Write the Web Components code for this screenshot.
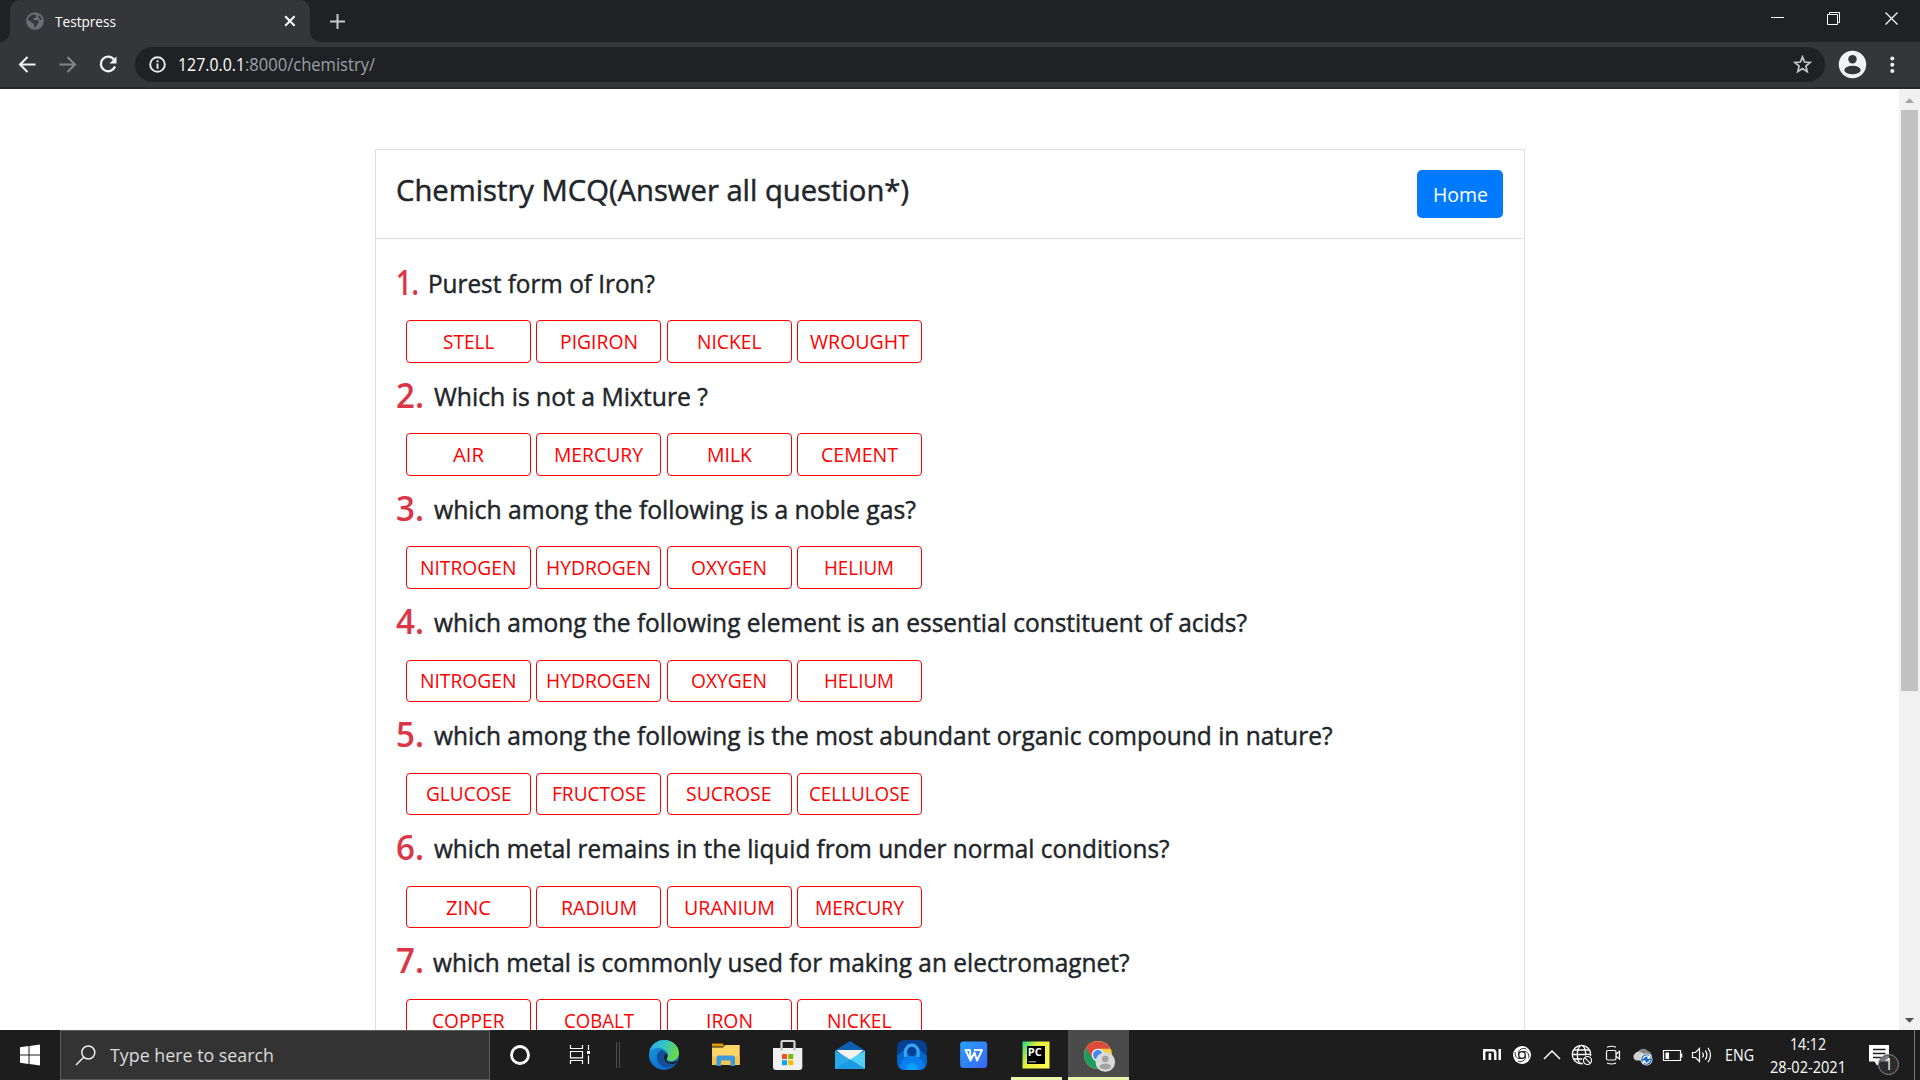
<!DOCTYPE html>
<html lang="en">
<head>
<meta charset="utf-8">
<title>Testpress</title>
<style>
html,body{margin:0;height:100%;overflow:hidden;background:#fff}
body{font-family:"Open Sans","Noto Sans",sans-serif}
</style>
</head>
<body>
<desktop-screen></desktop-screen>
<script>
function define(name, html, after){
  const t=document.createElement('template');
  t.innerHTML=html;
  customElements.define(name, class extends HTMLElement{
    constructor(){super();this.attachShadow({mode:'open'}).appendChild(t.content.cloneNode(true));}
    connectedCallback(){ if(after) after.call(this,this.shadowRoot); }
  });
}

/* Text squeezed or stretched to a set advance width */
define('fit-text', `<style>
:host{display:inline-block;white-space:nowrap}
span{display:inline-block;transform-origin:0 50%;white-space:pre}
</style><span><slot></slot></span>`, function(r){
  const w=+this.getAttribute('w'), s=r.querySelector('span');
  this.style.width=w+'px';
  const n=s.getBoundingClientRect().width;
  if(n) s.style.transform='scaleX('+(w/n)+')';
});

define('tab-strip', `<style>
:host{display:flex;height:42px;background:#202124;align-items:stretch;color:#fff}
.tab{width:300px;margin-left:10px;background:#35363a;border-radius:10px 10px 0 0;display:flex;align-items:center;position:relative;box-sizing:border-box;padding:0 14px 0 16px;font-size:15px}
.tab::before,.tab::after{content:"";position:absolute;bottom:0;width:10px;height:10px}
.tab::before{left:-10px;background:radial-gradient(circle at 0 0,transparent 9.5px,#35363a 10px)}
.tab::after{right:-10px;background:radial-gradient(circle at 100% 0,transparent 9.5px,#35363a 10px)}
.tab svg:first-child{margin-right:11px}
.x{margin-left:auto}
.plus{margin:13px 0 0 19px}
.win{margin-left:auto;display:flex}
svg{display:block}
</style>
<div class="tab">
<svg width="18" height="18" viewBox="0 0 18 18"><circle cx="9" cy="9" r="8.8" fill="#6b6e72"/><path d="M2.600 5.500Q4.500 2.600 8.500 2.300L10.500 3.700 9.800 5.400 7.400 6.200 7.300 7.800 9.600 8.300 12.300 8.200 12.800 10.200 11.200 12 10.800 13.600 8.200 15.800Q7.800 13.300 8.300 11.800L5.500 10.800 4.600 8.800 2 8.500Z" fill="#35363a"/><path d="M12 3L14.800 5 15.900 8.200 14 7.500 12.700 5.600Z" fill="#35363a"/></svg>
<fit-text w="61">Testpress</fit-text>
<svg class="x" width="12" height="12" viewBox="0 0 12 12"><path d="M1.200 1.200L10.600 10.800M10.600 1.200L1.200 10.800" stroke="#fff" stroke-width="2"/></svg>
</div>
<svg class="plus" width="17" height="17" viewBox="0 0 17 17"><path d="M8.500 1V16M1 8.500H16" stroke="#c6c8ca" stroke-width="2"/></svg>
<div class="win">
<svg width="59" height="42" viewBox="0 0 59 42"><path d="M25 17.500H38" stroke="#fff"/></svg>
<svg width="57" height="42" viewBox="0 0 57 42"><path d="M22.500 14.500H32.500V24.500H22.500ZM24.500 14V12.500H34.500V22.500H33" stroke="#fff" fill="none"/></svg>
<svg width="58" height="42" viewBox="0 0 58 42"><path d="M23.500 12.500L35.500 24.500M35.500 12.500L23.500 24.500" stroke="#fff" stroke-width="1.200"/></svg>
</div>`);

define('tool-bar', `<style>
:host{display:flex;height:47px;background:#35363a;border-bottom:2px solid #28292c;box-sizing:border-box;align-items:flex-start;padding-top:5px}
svg{display:block;flex:none}
.nav{display:flex;width:135px}
.pill{width:1690px;height:35px;border-radius:18px;background:#202124;display:flex;align-items:center;font-size:17.500px;color:#9aa0a6;line-height:35px}
.pill .i{margin:0 12px 0 14px}
.pill b{font-weight:400;color:#fff}
.pill .s{margin-left:auto;margin-right:13px}
</style>
<div class="nav"><svg width="135" height="35" viewBox="0 0 135 35"><g fill="none" stroke-width="2"><path d="M35.500 17.500H20.500M27.500 10L20 17.500 27.500 25" stroke="#f1f3f4"/><path d="M59.500 17.500H74.500M67.500 10L75 17.500 67.500 25" stroke="#85868a"/><path d="M114 12.500A7.300 7.300 0 1 0 115 19.500" stroke="#f1f3f4" stroke-width="2.300"/></g><path d="M116.500 9.500V16.500H109.500Z" fill="#f1f3f4"/></svg></div>
<div class="pill">
<svg class="i" width="17" height="17" viewBox="0 0 17 17"><circle cx="8.500" cy="8.500" r="7.300" fill="none" stroke="#e8eaed" stroke-width="1.900"/><path d="M8.500 4.300V6.200M8.500 7.500V12.800" stroke="#e8eaed" stroke-width="1.900"/></svg>
<b><fit-text w="67">127.0.0.1</fit-text></b><fit-text w="130">:8000/chemistry/</fit-text>
<svg class="s" width="19" height="19" viewBox="0 0 19 19"><path d="M9.500 1.900L11.600 7 17.100 7.400 12.900 11 14.200 16.600 9.500 13.600 4.800 16.600 6.100 11 1.900 7.400 7.400 7Z" fill="none" stroke="#c5c6c8" stroke-width="1.700"/></svg>
</div>
<svg width="95" height="35" viewBox="0 0 95 35"><circle cx="27.500" cy="17.500" r="13.700" fill="#f1f3f4"/><circle cx="27.500" cy="12.300" r="4.200" fill="#35363a"/><ellipse cx="27.500" cy="23" rx="8.200" ry="4.300" fill="#35363a"/><g fill="#f1f3f4"><circle cx="67.300" cy="11.500" r="2"/><circle cx="67.300" cy="17.700" r="2"/><circle cx="67.300" cy="24" r="2"/></g></svg>`);

define('answer-option', `<style>
:host{display:flex;width:125px;height:42.500px;box-sizing:border-box;border:1.200px solid #f00;border-radius:4px;align-items:center;justify-content:center;color:#f00;font-size:19.500px;line-height:20px;padding-top:1px;background:#fff}
</style><slot></slot>`);

define('mcq-question', `<style>
:host{display:block;height:113.100px}
.q{display:flex;height:42px;align-items:baseline;line-height:42px;color:#212529;font-size:25px}
.t{-webkit-text-stroke:.45px #212529}
.n{color:#dc3545;font-size:34.500px;font-weight:600;flex:none;position:relative;top:1.500px}
.o{display:flex;margin:19.300px 0 0 10px;gap:5.270px}
</style><div class="q"><span class="n"></span><span class="t"></span></div><div class="o"></div>`, function(r){
  const a=k=>this.getAttribute(k), mk=(txt,w)=>{const f=document.createElement('fit-text');f.textContent=txt;f.setAttribute('w',w);return f};
  r.querySelector('.n').append(mk(a('n'), a('n')==='1.'?23:28));
  r.querySelector('.n').style.width=a('x')+'px';
  r.querySelector('.t').append(mk(a('text'), +a('w')));
  a('opts').split(',').forEach(s=>{const [t,w]=s.split(':');const o=document.createElement('answer-option');r.querySelector('.o').append(o);o.append(mk(t,+w+2));});
});

define('quiz-card', `<style>
:host{display:block;width:1150px;height:881px;box-sizing:border-box;border:1px solid #dcdee4;border-bottom:0;background:#fff;overflow:hidden}
header{display:flex;justify-content:space-between;align-items:flex-start;height:89px;box-sizing:border-box;border-bottom:1px solid #dcdee4;margin-right:1px;padding:20px 20px 0 20px}
h4{margin:0;font-size:30px;font-weight:400;line-height:39px;color:#212529;-webkit-text-stroke:.5px #212529}
.home{width:86px;height:48px;border-radius:5px;background:#007bff;color:#fff;display:flex;align-items:center;justify-content:center;font-size:20px;line-height:46px;padding-top:2px;box-sizing:border-box}
main{padding:20px 0 0 20px}
</style>
<header><h4><fit-text w="513">Chemistry MCQ(Answer all question*)</fit-text></h4><div class="home"><fit-text w="55">Home</fit-text></div></header>
<main>
<mcq-question n="1." x="32" w="227" text="Purest form of Iron?" opts="STELL:49.4,PIGIRON:76,NICKEL:62.5,WROUGHT:97"></mcq-question>
<mcq-question n="2." x="38" w="274" text="Which is not a Mixture ?" opts="AIR:29,MERCURY:87,MILK:43,CEMENT:75"></mcq-question>
<mcq-question n="3." x="38" w="482" text="which among the following is a noble gas?" opts="NITROGEN:94.5,HYDROGEN:103,OXYGEN:74,HELIUM:68"></mcq-question>
<mcq-question n="4." x="38" w="813" text="which among the following element is an essential constituent of acids?" opts="NITROGEN:94.5,HYDROGEN:103,OXYGEN:74,HELIUM:68"></mcq-question>
<mcq-question n="5." x="38" w="898.500" text="which among the following is the most abundant organic compound in nature?" opts="GLUCOSE:83.5,FRUCTOSE:92,SUCROSE:83.5,CELLULOSE:99"></mcq-question>
<mcq-question n="6." x="38" w="735.500" text="which metal remains in the liquid from under normal conditions?" opts="ZINC:43,RADIUM:74,URANIUM:89,MERCURY:87"></mcq-question>
<mcq-question n="7." x="37" w="696.500" text="which metal is commonly used for making an electromagnet?" opts="COPPER:70.5,COBALT:68,IRON:45,NICKEL:62.5"></mcq-question>
</main>`);

define('scroll-bar', `<style>
:host{display:flex;flex-direction:column;width:21px;background:#f1f1f1;align-items:center}
svg{display:block;flex:none}
.thumb{width:17px;height:581px;background:#c1c1c1}
.end{margin-top:auto}
</style><svg width="21" height="21" viewBox="0 0 21 21"><path d="M6 14L10.500 9.200 15 14Z" fill="#a3a3a3"/></svg><div class="thumb"></div><svg class="end" width="21" height="21" viewBox="0 0 21 21"><path d="M6 9L10.500 13.800 15 9Z" fill="#505050"/></svg>`);

define('task-bar', `<style>
:host{display:flex;height:50px;background:#1d1d1d;color:#fff}
svg{display:block;flex:none}
.search{width:430px;box-sizing:border-box;background:#333;border:1px solid #5c5c5c;display:flex;align-items:center;color:#dcdcdc;font-size:18.500px;line-height:46px}
.search svg{margin:0 13px 0 14px}
.tray{margin-left:auto;display:flex;align-items:center}
.clock{width:90px;display:flex;flex-direction:column;align-items:center;font-size:17px;line-height:23px;padding:0 0 1px 1px;box-sizing:border-box}
.eng{width:45px;padding-left:8px;box-sizing:border-box;font-size:17px;line-height:50px}
</style>
<svg width="60" height="50" viewBox="0 0 60 50"><path d="M20 17.300L28.500 16V24.400H20ZM29.500 15.900L40 14.500V24.400H29.500ZM20 25.500H28.500V33.900L20 32.700ZM29.500 25.500H40V35.500L29.500 34.100Z" fill="#fff"/></svg>
<div class="search"><svg width="22" height="22" viewBox="0 0 22 22"><circle cx="13.300" cy="8.500" r="6.500" fill="none" stroke="#eee" stroke-width="1.500"/><path d="M8.700 13.200L1 21" stroke="#eee" stroke-width="1.500"/></svg><fit-text w="164">Type here to search</fit-text></div>
<svg width="60" height="50" viewBox="0 0 60 50"><circle cx="30" cy="25" r="8.500" fill="none" stroke="#fff" stroke-width="2.800"/></svg>
<svg width="60" height="50" viewBox="0 0 60 50"><g fill="none" stroke="#fff" stroke-width="1.200"><path d="M20.500 15V18.500H32.500V15M20.500 34V30.500H32.500V34M20.500 21.500H32.500V27.800H20.500ZM38.500 15V20M38.500 25.500V34"/></g><rect x="37" y="21" width="3" height="3" fill="#fff"/></svg>
<svg width="23" height="50" viewBox="0 0 23 50"><path d="M6.500 12V38M9.500 12V38" stroke="#4c4c4c"/></svg>

<svg width="62" height="50" viewBox="0 0 62 50"><defs><linearGradient id="e1" x1="0" y1="0" x2="1" y2=".3"><stop offset="0" stop-color="#28aee8"/><stop offset=".5" stop-color="#35c1cb"/><stop offset="1" stop-color="#66d94c"/></linearGradient><linearGradient id="e2" x1="0" y1="0" x2=".6" y2="1"><stop offset="0" stop-color="#1a9fe0"/><stop offset="1" stop-color="#0c66c9"/></linearGradient></defs><circle cx="31" cy="25" r="15" fill="url(#e2)"/><path d="M16.400 21.500C18.500 14 24.500 10 31 10 40 10 46 16.200 46 23 46 28 42 31 38 31 35.500 31 33.500 30 33.800 28.700 35.500 27 35.600 24 33.500 21.500 30 17.200 20.500 16 16.400 21.500Z" fill="url(#e1)"/><path d="M26.800 20.500C23 24 22.800 30 26.800 34 31 38.300 38 38.800 43.800 32.800 37.500 36.300 31.200 33.500 31 27.600 31 25.500 32 24.400 33 23.700 31.800 21 29 19.700 26.800 20.500Z" fill="#114f99"/><path d="M33.700 28.700C33 30.500 35 32.200 38.500 32.200 41.500 32.200 43.600 31.200 45 30L43.700 32.500C37.500 36 31 33 31 27.600Q31 24 34 23.500 35.500 26.500 33.700 28.700Z" fill="#1d1d1d"/></svg>
<svg width="62" height="50" viewBox="0 0 62 50"><path d="M17 13.500H27.500L30 16.500H17Z" fill="#e09a00"/><path d="M17 17.500H28L30.500 15H44.700V35H17Z" fill="#ffd566"/><path d="M17 26H44.700V35H17Z" fill="#f8c64e"/><path d="M21.500 36V27.500Q21.500 25.500 23.500 25.500H38Q40 25.500 40 27.500V36H35.500V30.500H26V36Z" fill="#3d9bdd"/></svg>
<svg width="62" height="50" viewBox="0 0 62 50"><path d="M24.500 19V12Q24.500 11 25.500 11H36.500Q37.500 11 37.500 12V19" fill="none" stroke="#d5d5d5" stroke-width="2.200"/><path d="M16 18H45.300V37Q45.300 40 42.300 40H19Q16 40 16 37Z" fill="#f0f0f0"/><path d="M24.500 18V20.500M37.500 18V20.500" stroke="#bbb" stroke-width="2.200"/><path d="M25 24H30V29H25Z" fill="#f25022"/><path d="M31.200 24H36.200V29H31.200Z" fill="#7fba00"/><path d="M25 30.200H30V35.200H25Z" fill="#00a4ef"/><path d="M31.200 30.200H36.200V35.200H31.200Z" fill="#ffb900"/></svg>
<svg width="62" height="50" viewBox="0 0 62 50"><path d="M16 20.500L31 11 46 20.500V26H16Z" fill="#0f5fb0"/><path d="M17.500 20H44.500L31 32Z" fill="#f3f3f3"/><path d="M16 20.500L31 29.500 46 39H16Z" fill="#29a9ea"/><path d="M46 20.500V39L31 29.500Z" fill="#50d0f5"/><path d="M16 39L31 29.500 46 39Z" fill="#1b9be2"/></svg>
<svg width="62" height="50" viewBox="0 0 62 50"><defs><clipPath id="k"><rect x="16" y="10" width="30" height="30" rx="8"/></clipPath></defs><g clip-path="url(#k)"><rect x="16" y="10" width="30" height="30" fill="#04408f"/><path d="M16 26L23 20 31 27 39 20 46 26V40H16Z" fill="#0566ca"/><path d="M24.500 27V21.500A6.300 6.300 0 0 1 37.100 21.500V27" fill="none" stroke="#35a4fb" stroke-width="3.300"/><circle cx="31" cy="39" r="13" fill="#0a7ff0"/><circle cx="31" cy="39" r="6" fill="#049fff"/></g></svg>
<svg width="62" height="50" viewBox="0 0 62 50"><defs><linearGradient id="w" x1="0" y1="0" x2="1" y2="1"><stop offset="0" stop-color="#2ba0ff"/><stop offset="1" stop-color="#3768f3"/></linearGradient></defs><rect x="17.200" y="11.500" width="27" height="26.500" rx="3" fill="url(#w)"/><path d="M22.500 20H27L27.500 30.500 22.500 20ZM27.500 30.500L31.500 22.500 34 30.500 39 20H31" fill="none" stroke="#fff" stroke-width="1.900" stroke-linejoin="round"/></svg>
<svg width="62" height="50" viewBox="0 0 62 50"><defs><linearGradient id="p" x1="0" y1="0" x2="1" y2=".6"><stop offset="0" stop-color="#21d789"/><stop offset=".45" stop-color="#e5ee3c"/><stop offset="1" stop-color="#fcf84a"/></linearGradient></defs><rect x="17.500" y="11.500" width="27" height="27" fill="url(#p)"/><rect x="22" y="16" width="18" height="18" fill="#000"/><text x="22.700" y="25.700" font-family="Open Sans" font-size="10.500" font-weight="700" fill="#fff" textLength="14" lengthAdjust="spacingAndGlyphs">PC</text><path d="M23.500 31.800H31" stroke="#999" stroke-width="1.300"/><rect x="6" y="47" width="51" height="3" fill="#e9f5ad"/></svg>
<svg width="62" height="50" viewBox="0 0 62 50"><rect x="1" width="61" height="50" fill="#4b4b4b"/><rect x="1" y="47" width="61" height="3" fill="#e9f5ad"/><circle cx="31" cy="25" r="14" fill="#ffcd40"/><path d="M31 25L18.900 18A14 14 0 0 0 31 39L37 28.500Z" fill="#1a9e5f"/><path d="M31 25L18.900 18A14 14 0 0 1 43.300 18.700H31Z" fill="#dd4b3e"/><path d="M19 17.800L25 28 31 18.600Z" fill="#dd4b3e"/><circle cx="31" cy="25" r="6.300" fill="#fff"/><circle cx="31" cy="25" r="5" fill="#4587f3"/><circle cx="38.300" cy="32" r="9.800" fill="#dadada"/><circle cx="38.300" cy="29" r="3.300" fill="#a2a2a2"/><ellipse cx="38.300" cy="36.500" rx="5.800" ry="3" fill="#a2a2a2"/></svg>

<div class="tray">
<svg width="30" height="50" viewBox="0 0 30 50"><path d="M7.200 30V20.200H15.500Q18.300 20.200 18.300 23V30" fill="none" stroke="#fff" stroke-width="2.400"/><path d="M11.600 23.300H14.200V30H11.600ZM21.500 19H24V30H21.500Z" fill="#fff"/></svg>
<svg width="30" height="50" viewBox="0 0 30 50"><circle cx="15" cy="25" r="9" fill="#fff"/><circle cx="15" cy="25" r="3.300" fill="none" stroke="#1d1d1d" stroke-width="1.300"/><path d="M11.700 25C10.500 20.500 14 17.500 19 18.800M18.300 25.500C19.500 29.500 16 32.500 11 31.200M15 21.700C19.500 20.300 22.500 23.500 21.800 28M15 28.300C10.500 29.700 7.500 26.500 8.200 22" fill="none" stroke="#1d1d1d" stroke-width=".9"/></svg>
<svg width="30" height="50" viewBox="0 0 30 50"><path d="M7 29L15 21 23 29" fill="none" stroke="#fff" stroke-width="1.500"/></svg>
<svg width="30" height="50" viewBox="0 0 30 50"><g fill="none" stroke="#fff" stroke-width="1.300"><circle cx="14.500" cy="24.500" r="9.200"/><ellipse cx="14.500" cy="24.500" rx="4.200" ry="9.200"/><path d="M6.500 20H22.500M5.500 24.500H23.500M6.500 29H17"/></g><circle cx="20.500" cy="30.500" r="5.500" fill="#1d1d1d"/><circle cx="20.500" cy="30.500" r="4" fill="none" stroke="#fff" stroke-width="1.200"/><path d="M17.700 27.700L23.300 33.300" stroke="#fff" stroke-width="1.200"/></svg>
<svg width="30" height="50" viewBox="0 0 30 50"><g fill="none" stroke="#fff" stroke-width="1.200"><rect x="9.500" y="20.500" width="9.500" height="9.500" rx="1.500"/><path d="M19 24.200L22.500 21.500V29L19 26.300M10 17.300Q14.500 15.200 19 17.300M10 33Q14.500 35 19 33"/></g></svg>
<svg width="30" height="50" viewBox="0 0 30 50"><path d="M11 22A6 6 0 0 1 21 21Q25 22 25 27L21 29Z" fill="#858585"/><path d="M9 30.500A4 4 0 0 1 8 23.500Q10.500 20.500 14 22L21 27 18 30.500Z" fill="#d0d0d0"/><circle cx="19.500" cy="29.500" r="6" fill="#fff"/><circle cx="19.500" cy="29.500" r="5.300" fill="#1769bd"/><path d="M16 29A3.600 3.600 0 0 1 22.500 27.500M23 30A3.600 3.600 0 0 1 16.500 31.500M22.800 25.300V28H20.300M16.200 33.800V31.200H18.700" fill="none" stroke="#fff" stroke-width="1.300"/></svg>
<svg width="30" height="50" viewBox="0 0 30 50"><path d="M6.500 20.500H23.500V30.500H6.500ZM24.700 23.500V27.500" fill="none" stroke="#fff" stroke-width="1.200"/><rect x="8.500" y="22.500" width="3.500" height="6.500" fill="#fff"/></svg>
<svg width="30" height="50" viewBox="0 0 30 50"><path d="M5.500 22.500H8.500L12.500 18.500V31.500L8.500 27.500H5.500Z" fill="none" stroke="#fff" stroke-width="1.200"/><path d="M15.500 22.500Q17.300 25 15.500 27.500M18.300 20.300Q21.500 25 18.300 29.700M21 17.800Q26 25 21 32.200" fill="none" stroke="#fff" stroke-width="1.200"/></svg>
<div class="eng"><fit-text w="29">ENG</fit-text></div>
<div class="clock"><fit-text w="36">14:12</fit-text><fit-text w="76">28-02-2021</fit-text></div>
<svg width="68" height="50" viewBox="0 0 68 50"><path d="M17 15H37V31.500H29L25 35.500 22.500 31.500H17Z" fill="#fff"/><path d="M21 19.500H33.500M21 23.500H33.500M21 27.500H29" stroke="#1d1d1d" stroke-width="1.300"/><circle cx="36.500" cy="34.500" r="10" fill="#2c2c2c" stroke="#8c8c8c"/><path d="M27.500 31.500Q30 25.500 37 25.200V31.500Z" fill="#7c7c7c"/><text x="32.300" y="40" font-family="Open Sans" font-size="15.500" fill="#fff">1</text><path d="M62.500 0V50" stroke="#777"/></svg>
</div>`);

define('desktop-screen', `<style>
:host{display:flex;flex-direction:column;width:1920px;height:1080px;overflow:hidden}
.page{flex:1;display:flex;height:941px;background:#fff;overflow:hidden}
.view{flex:1;padding:60px 0 0 375px;overflow:hidden}
</style><tab-strip></tab-strip><tool-bar></tool-bar><div class="page"><div class="view"><quiz-card></quiz-card></div><scroll-bar></scroll-bar></div><task-bar></task-bar>`);
</script>
</body>
</html>
